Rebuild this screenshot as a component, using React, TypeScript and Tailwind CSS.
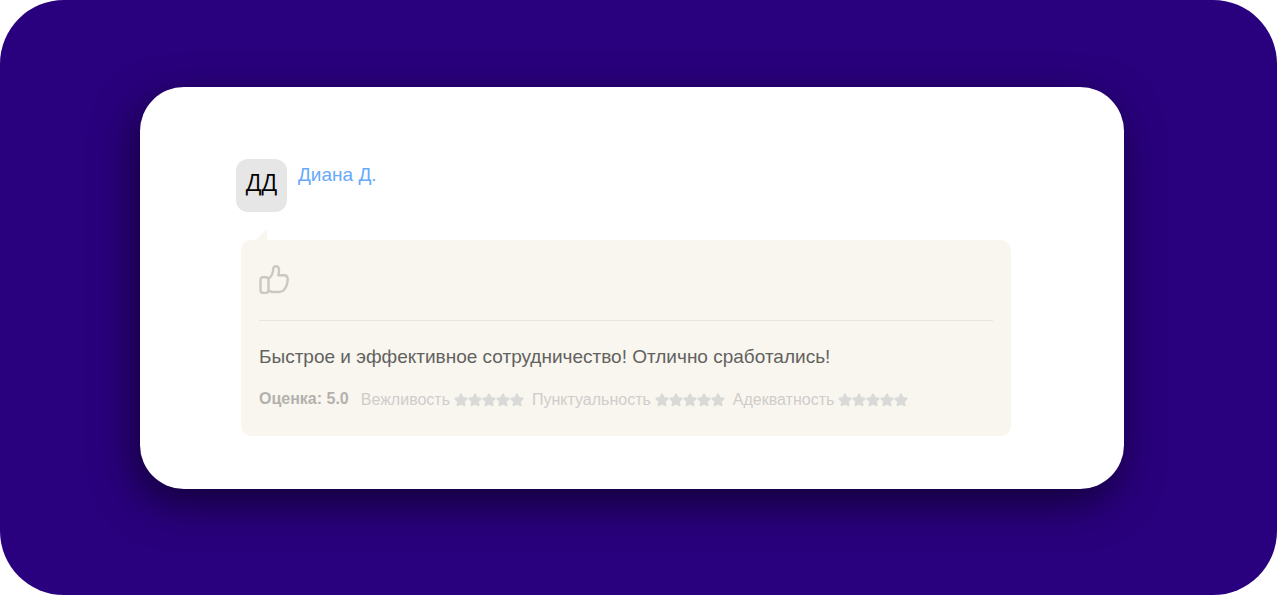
import React from 'react';

const ratings = [
  { label: 'Вежливость', stars: 5 },
  { label: 'Пунктуальность', stars: 5 },
  { label: 'Адекватность', stars: 5 },
];

function ThumbUp() {
  return (
    <svg
      className="w-8 h-8 text-[#cac8c3]"
      viewBox="0 0 32 32"
      fill="none"
      stroke="currentColor"
      strokeWidth={2.4}
      strokeLinecap="round"
      strokeLinejoin="round"
    >
      <rect x="1.5" y="13.3" width="8" height="15.6" rx="2.6" />
      <path d="M9.5 14.5 C12 13.5 14.2 9 14.2 5.5 C14.2 3.4 15 2.3 16.6 2.3 C18.8 2.3 20 4 20 6.4 C20 8.2 19.6 9.8 19.3 11.3 H25 C27.4 11.3 28.7 12.8 28.7 15.4 C28.7 19.4 27.2 23 25.2 25.6 C24 27.3 22.8 28 20.4 28 H15 C12.6 28 11 27.4 9.5 26.6" />
    </svg>
  );
}

function Star() {
  return (
    <svg
      className="w-3.5 h-3.5"
      viewBox="0 0 24 24"
      fill="currentColor"
      stroke="currentColor"
      strokeWidth={4}
      strokeLinejoin="round"
    >
      <path d="M12 2.8l2.8 6 6.4.8-4.8 4.5 1.3 6.6L12 17.4l-5.7 3.3 1.3-6.6-4.8-4.5 6.4-.8z" />
    </svg>
  );
}

export default function App() {
  return (
    <div className="min-h-screen bg-white font-['Liberation_Sans',sans-serif]">
      <main className="min-h-screen rounded-[64px] bg-[#29007d] pt-[87px] pb-[106px] pl-[140px] pr-[153px]">
        <article className="rounded-[44px] bg-white pt-18 pb-[53px] pl-24 pr-[113px] shadow-[-5px_14px_42px_rgba(0,0,0,0.55)]">
          {/* Author */}
          <header className="flex items-start gap-[11px]">
            <div className="flex h-[53px] w-[51px] items-center justify-center rounded-xl bg-[#e6e6e6] pb-2 font-['Open_Sans',sans-serif] text-[23px] leading-6 text-black">
              ДД
            </div>
            <a href="#" className="pt-1 text-[19px] leading-6 text-[#67a9fb]">
              Диана Д.
            </a>
          </header>

          {/* Review bubble */}
          <section className="relative mt-7 ml-[5px] rounded-[10px] bg-[#f9f6ef] px-[18px] pt-6 pb-[26px]">
            <svg className="absolute -top-[11px] left-3.5 h-3 w-3 text-[#f9f6ef]" viewBox="0 0 12 12">
              <path d="M0 12 L12 0 V12 Z" fill="currentColor" />
            </svg>
            <ThumbUp />
            <hr className="mt-6 border-[#e7e5df]" />
            <p className="mt-6 text-[19px] leading-6 text-[#62625f]">
              Быстрое и эффективное сотрудничество! Отлично сработались!
            </p>
            <div className="mt-5 flex items-end gap-3 text-[16px] leading-5 text-[#cfcccb]">
              <strong className="pb-px text-[#b3b1ae]">Оценка: 5.0</strong>
              <div className="flex gap-2">
                {ratings.map((rating) => (
                  <div key={rating.label} className="flex items-center gap-1">
                    <span>{rating.label}</span>
                    <span className="flex text-[#d9d9d8]">
                      {Array.from({ length: rating.stars }, (_, i) => (
                        <Star key={i} />
                      ))}
                    </span>
                  </div>
                ))}
              </div>
            </div>
          </section>
        </article>
      </main>
    </div>
  );
}
